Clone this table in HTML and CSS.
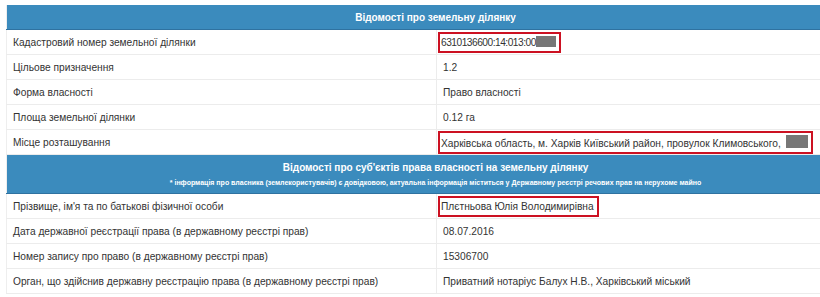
FILE: index.html
```html
<!DOCTYPE html>
<html lang="uk">
<head>
<meta charset="utf-8">
<link rel="stylesheet" href="styles.css">
</head>
<body>
<table class="info">
  <colgroup><col class="c1"><col class="c2"></colgroup>
  <tr class="head"><th colspan="2">Відомості про земельну ділянку</th></tr>
  <tr><td class="k">Кадастровий номер земельної ділянки</td><td class="v"><span class="mark"><span class="num">6310136600:14:013:00</span><span class="redact r1"></span></span></td></tr>
  <tr><td class="k">Цільове призначення</td><td class="v">1.2</td></tr>
  <tr><td class="k">Форма власності</td><td class="v">Право власності</td></tr>
  <tr><td class="k">Площа земельної ділянки</td><td class="v">0.12 га</td></tr>
  <tr><td class="k">Місце розташування</td><td class="v"><span class="mark">Харківська область, м. Харків Київський район, провулок Климовського, <span class="redact r2"></span></span></td></tr>
  <tr class="head head2"><th colspan="2">Відомості про суб'єктів права власності на земельну ділянку<div class="note">* інформація про власника (землекористувачів) є довідковою, актуальна інформація міститься у Державному реєстрі речових прав на нерухоме майно</div></th></tr>
  <tr><td class="k">Прізвище, ім'я та по батькові фізичної особи</td><td class="v"><span class="mark">Плєтньова Юлія Володимирівна</span></td></tr>
  <tr><td class="k">Дата державної реєстрації права (в державному реєстрі прав)</td><td class="v">08.07.2016</td></tr>
  <tr><td class="k">Номер запису про право (в державному реєстрі прав)</td><td class="v">15306700</td></tr>
  <tr><td class="k">Орган, що здійснив державну реєстрацію права (в державному реєстрі прав)</td><td class="v">Приватний нотаріус Балух Н.В., Харківський міський</td></tr>
</table>
</body>
</html>
```
FILE: styles.css
```css
html {
  overflow: hidden;
}
html, body {
  margin: 0;
  padding: 0;
  background: #fff;
}
body {
  padding: 5px 0 0 6px;
  font-family: "Liberation Sans", Arial, sans-serif;
  font-size: 10.2px;
  color: #333;
}
.info {
  width: 858px;
  table-layout: fixed;
  border-collapse: collapse;
  border-left: 1px solid #eee;
}
.c1 { width: 430px; }
.head th {
  background: #3b8bbd;
  color: #fff;
  font-weight: bold;
  font-size: 10px;
  height: 24px;
  padding: 0;
  text-align: center;
  border-bottom: 1px solid #2f72a0;
}
.head2 th {
  height: 35px;
  padding-top: 3px;
  vertical-align: top;
  line-height: 20px;
}
.note {
  font-size: 7px;
  line-height: 10px;
  font-weight: bold;
}
td {
  height: 24px;
  padding: 0 0 0 6px;
  border-bottom: 1px solid #ececec;
  vertical-align: middle;
  white-space: nowrap;
  overflow: hidden;
}
td.k {
  border-right: 1px solid #ececec;
}
.mark {
  display: inline-block;
  border: 2px solid #cc1122;
  padding: 2px 3px 2px 1px;
  margin-left: -5px;
  line-height: 13px;
}
.num {
  letter-spacing: -0.5px;
}
.redact {
  display: inline-block;
  background: #777;
  vertical-align: -1px;
}
.r1 { width: 20px; height: 11px; }
.r2 { width: 22px; height: 13px; margin-left: 2px; }
```
